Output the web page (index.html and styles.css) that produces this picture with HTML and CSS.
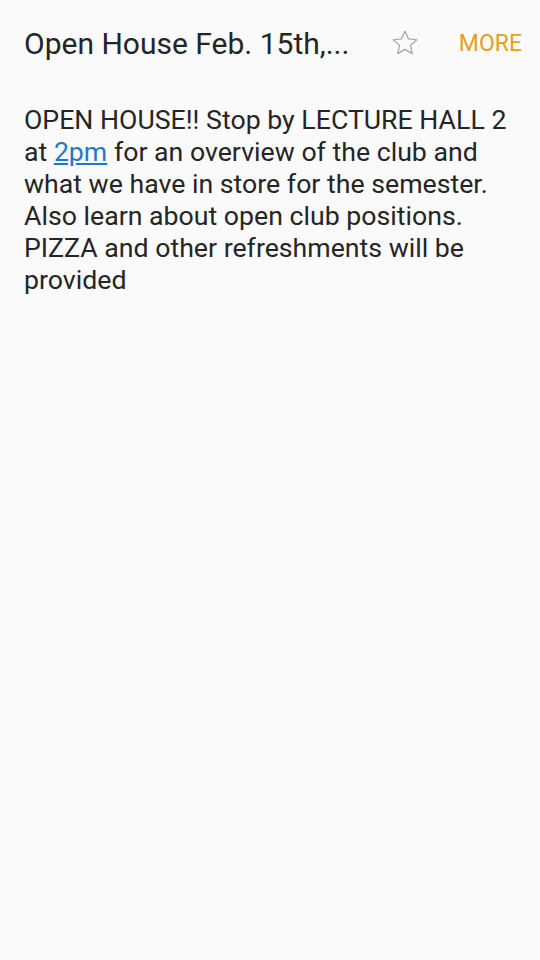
FILE: index.html
```html
<!DOCTYPE html>
<html lang="en">
<head>
    <meta charset="UTF-8">
    <meta name="viewport" content="width=device-width, initial-scale=1.0">
    <title>Open House</title>
    <link rel="stylesheet" href="styles.css">
</head>
<body>
    <div class="header">
        <h1 class="title">Open House Feb. 15th,...</h1>
        <svg class="star" width="30" height="30" viewBox="0 0 24 24">
            <path d="M12 2.6l2.8 6.1 6.6.7-5 4.5 1.4 6.6L12 17.1l-5.8 3.4 1.4-6.6-5-4.5 6.6-.7z" fill="none" stroke="#a6a6a6" stroke-width="1" stroke-linejoin="round"/>
        </svg>
        <span class="more">MORE</span>
    </div>
    <p class="body-text">OPEN HOUSE!! Stop by LECTURE HALL 2 at <a href="#">2pm</a> for an overview of the club and what we have in store for the semester. Also learn about open club positions. PIZZA and other refreshments will be provided</p>
</body>
</html>
```
FILE: styles.css
```css
body {
    margin: 0;
    background-color: #fafafa;
    font-family: Roboto, "Noto Sans", sans-serif;
    color: #252525;
}
.header {
    display: flex;
    align-items: center;
    height: 86px;
    padding: 0 18px 0 24px;
}
.title {
    flex: 1;
    margin: 0;
    font-size: 30px;
    font-weight: 400;
    white-space: nowrap;
    overflow: hidden;
}
.star {
    flex: none;
    margin-right: 39px;
}
.more {
    color: #e99e1b;
    font-size: 23px;
}
.body-text {
    margin: 18px 24px 0;
    font-size: 26.7px;
    line-height: 32px;
}
.body-text a {
    color: #1e7ac8;
}
```
